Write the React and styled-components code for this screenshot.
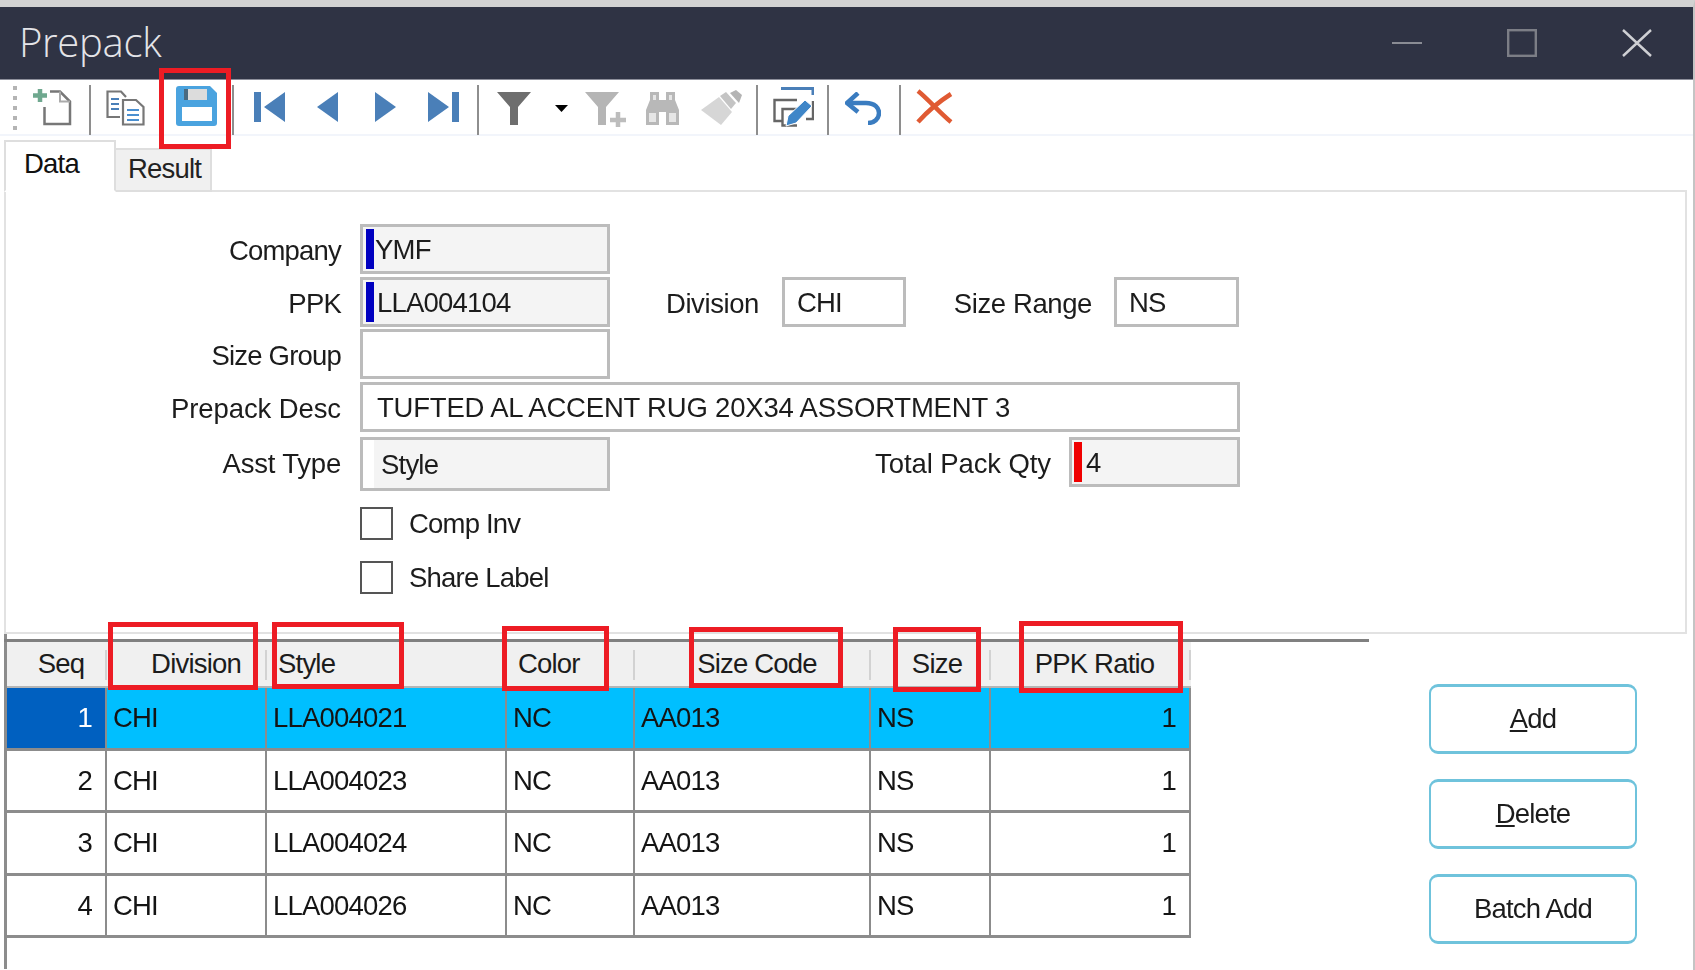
import React from 'react'
import styled, { createGlobalStyle } from 'styled-components'

const GlobalStyle = createGlobalStyle`
    html, body {
        margin: 0;
        padding: 0;
        background: #fff;
    }
    body {
        font-family: "Liberation Sans", Arial, sans-serif;
        font-size: 27.5px;
        letter-spacing: -0.8px;
        color: #1c1c1c;
        overflow: hidden;
    }
`

const Window = styled.div`
    width: 1695px;
    height: 970px;
    position: relative;
    overflow: hidden;
    background: #fff;
`

// the shot is an enlarged bitmap, so everything but the red marks is a little soft
const Screen = styled.div`
    height: 100%;
    box-sizing: border-box;
    border-top: 7px solid #d2d2d2;
    border-right: 2px solid #c4c4c4;
    filter: blur(0.5px);
`

const TitleBar = styled.div`
    height: 73px;
    box-sizing: border-box;
    background: #2f3344;
    border-bottom: 1px solid #8d8f9b;
    display: flex;
    align-items: center;
    justify-content: space-between;
    padding-left: 19px;
`

const Title = styled.div`
    font-family: "Open Sans", sans-serif;
    font-weight: 300;
    font-size: 40px;
    letter-spacing: -0.3px;
    color: #e4e4e8;
    margin-top: -3px;
`

const WinControls = styled.div`
    display: flex;
    align-items: center;
    gap: 85px;
    padding-right: 41px;
`

const Toolbar = styled.div`
    height: 56px;
    box-sizing: border-box;
    display: flex;
    align-items: flex-start;
    border-bottom: 2px solid #f2f5fb;
    padding-left: 13px;
    position: relative;
`

const Grip = styled.div`
    width: 4px;
    height: 46px;
    margin-top: 6px;
    background: repeating-linear-gradient(to bottom, #b4b4b4 0 4px, transparent 4px 10px);
`

const Sep = styled.div`
    width: 2px;
    height: 50px;
    margin-top: 5px;
    margin-left: ${p => p.$left}px;
    background: #8e8e8e;
    flex: none;
`

const Tool = styled.svg`
    flex: none;
    display: block;
    margin-left: ${p => p.$left}px;
    margin-top: ${p => p.$top}px;
`

const TabStrip = styled.div`
    display: flex;
    align-items: flex-end;
    height: 56px;
    box-sizing: border-box;
    padding-left: 4px;
    margin-right: 6px;
    margin-bottom: -2px;
    position: relative;
    z-index: 1;
`

const Tab = styled.div`
    box-sizing: border-box;
    width: ${p => p.$width}px;
    height: ${p => (p.$active ? 52 : 44)}px;
    background: ${p => (p.$active ? '#fff' : '#f0f0f0')};
    border: 2px solid #dedede;
    border-left-width: ${p => (p.$active ? 2 : 0)}px;
    border-bottom-color: ${p => (p.$active ? '#fff' : '#dedede')};
    color: ${p => (p.$active ? '#111' : '#222')};
    padding: ${p => (p.$active ? '6px 0 0 18px' : '3px 0 0 12px')};
    line-height: 32px;
`

const Panel = styled.div`
    box-sizing: border-box;
    height: 444px;
    margin: 0 6px 0 4px;
    border: 2px solid #e2e2e2;
    padding-top: 32px;
    display: flex;
    flex-direction: column;
`

const Row = styled.div`
    display: flex;
    align-items: flex-start;
    margin-bottom: ${p => p.$gap}px;
`

const Label = styled.div`
    box-sizing: border-box;
    width: ${p => p.$width}px;
    height: 50px;
    flex: none;
    text-align: right;
    line-height: ${p => p.$lh || 53}px;
    letter-spacing: ${p => p.$track || -0.8}px;
    white-space: nowrap;
`

const Field = styled.div`
    box-sizing: border-box;
    flex: none;
    width: ${p => p.$width}px;
    height: ${p => p.$height || 50}px;
    margin-left: ${p => p.$left}px;
    border: 3px solid #bcbcbc;
    background: ${p => (p.$readonly ? '#f4f4f4' : '#fff')};
    padding-left: ${p => p.$pad}px;
    letter-spacing: ${p => p.$track || -0.8}px;
    line-height: 41px;
    display: flex;
    align-items: center;
    white-space: nowrap;
`

const Marker = styled.span`
    width: 8px;
    height: 40px;
    margin-right: ${p => p.$space}px;
    flex: none;
    background: ${p => p.$color};
`

const StyleField = styled(Field)`
    background: linear-gradient(to right, #fff 0 11px, #f4f4f4 11px);
`

const CheckRow = styled.div`
    display: flex;
    align-items: center;
    gap: 16px;
    margin: 0 0 21px 354px;
    height: 33px;
`

const CheckBox = styled.span`
    box-sizing: border-box;
    width: 33px;
    height: 33px;
    border: 2px solid #555;
    background: #fff;
`

const Lower = styled.div`
    display: flex;
    position: relative;
    height: 335px;
    margin-left: 4px;
    border-left: 3px solid #8c8c8c;
`

const TopRule = styled.div`
    position: absolute;
    left: -3px;
    top: 5px;
    width: 1365px;
    height: 3px;
    background: #808080;
`

const Table = styled.div`
    display: grid;
    grid-template-columns: 100px 160px 240px 128px 236px 120px 200px;
    grid-template-rows: 46px repeat(4, 62.5px);
    margin-top: 8px;
    align-self: flex-start;
    width: 1184px;
`

const HeadCell = styled.div`
    position: relative;
    box-sizing: border-box;
    background: #f0f0f0;
    border-bottom: 2px solid #b5b5b5;
    text-align: ${p => p.$align};
    padding-left: ${p => p.$left || 0}px;
    padding-right: ${p => p.$right || 0}px;
    line-height: 44px;
    white-space: nowrap;

    &::after {
        content: '';
        position: absolute;
        right: 0;
        top: 8px;
        bottom: 6px;
        width: 2px;
        background: #d2d2d2;
    }
`

const Cell = styled.div`
    box-sizing: border-box;
    background: ${p => (p.$mark ? '#0060c0' : p.$selected ? '#00bfff' : '#fff')};
    color: ${p => (p.$mark ? '#fff' : '#141414')};
    border-right: 2px solid #8c8c8c;
    border-bottom: 3px solid #8c8c8c;
    text-align: ${p => (p.$right ? 'right' : 'left')};
    padding: ${p => (p.$right ? `0 ${p.$right}px 0 0` : '0 0 0 6px')};
    line-height: 60px;
    white-space: nowrap;
`

const Actions = styled.div`
    display: flex;
    flex-direction: column;
    gap: 25px;
    margin: 50px 0 0 238px;
`

const ActionButton = styled.div`
    box-sizing: border-box;
    width: 208px;
    height: 70px;
    border: 2px solid #6fc3dc;
    border-top-width: 3px;
    border-bottom-width: 3px;
    border-radius: 9px;
    display: flex;
    align-items: center;
    justify-content: center;
    color: #1c1c1c;
`

const Highlight = styled.div`
    position: absolute;
    box-sizing: border-box;
    left: ${p => p.$x}px;
    top: ${p => p.$y}px;
    width: ${p => p.$w}px;
    height: ${p => p.$h}px;
    border: 5px solid #ed1c24;
    z-index: 3;
    pointer-events: none;
`

const BLUE = '#4a7fb8'

const NewIcon = () => (
    <Tool $left={15} $top={8} width="40" height="38" viewBox="0 0 40 38">
        <path d="M1 7.5H15M8 1V14" stroke="#6fa88f" strokeWidth="4.5" fill="none" />
        <path d="M18 3.5H28L38 13.5V36H12.5V19" stroke="#777" strokeWidth="2.5" fill="none" />
        <path d="M28 3.5V13.5H38" stroke="#aaa" strokeWidth="2" fill="none" />
    </Tool>
)

const CopyIcon = () => (
    <Tool $left={15} $top={10} width="39" height="36" viewBox="0 0 39 36">
        <path d="M14 27H1.5V1.5H15L20 7" stroke="#777" strokeWidth="2.2" fill="none" />
        <path d="M5 9H13M5 14H13M5 19H13" stroke="#4a7fb8" strokeWidth="2" />
        <path d="M17 10H30L37.5 17V34.5H17Z" stroke="#777" strokeWidth="2.2" fill="#fff" />
        <path d="M21 20H33M21 25H33M21 30H33" stroke="#4a8fd0" strokeWidth="2" />
    </Tool>
)

const SaveIcon = () => (
    <Tool $left={31} $top={6} width="41" height="40" viewBox="0 0 41 40">
        <path d="M0 3Q0 0 3 0H34L41 7V37Q41 40 38 40H3Q0 40 0 37Z" fill="#4aa3df" />
        <path d="M8 3H12V14H8Z" fill="#4a6a80" />
        <path d="M12 3H31V14H12Z" fill="#dcdcdc" />
        <path d="M6 21H36V35H6Z" fill="#fff" />
    </Tool>
)

const FirstIcon = () => (
    <Tool $left={20} $top={12} width="31" height="30" viewBox="0 0 31 30">
        <path d="M0 0H7V30H0ZM10 15L31 0V30Z" fill={BLUE} />
    </Tool>
)

const PrevIcon = () => (
    <Tool $left={32} $top={12} width="21" height="30" viewBox="0 0 21 30">
        <path d="M0 15L21 0V30Z" fill={BLUE} />
    </Tool>
)

const NextIcon = () => (
    <Tool $left={37} $top={12} width="21" height="30" viewBox="0 0 21 30">
        <path d="M0 0L21 15L0 30Z" fill={BLUE} />
    </Tool>
)

const LastIcon = () => (
    <Tool $left={32} $top={12} width="31" height="30" viewBox="0 0 31 30">
        <path d="M0 0L21 15L0 30ZM24 0H31V30H24Z" fill={BLUE} />
    </Tool>
)

const FilterIcon = () => (
    <Tool $left={18} $top={12} width="34" height="33" viewBox="0 0 34 33">
        <path d="M0 0H34L21 15V33H13V15Z" fill="#6e6e6e" />
    </Tool>
)

const CaretIcon = () => (
    <Tool $left={24} $top={25} width="13" height="7" viewBox="0 0 13 7">
        <path d="M0 0H13L6.5 7Z" fill="#000" />
    </Tool>
)

const FilterAddIcon = () => (
    <Tool $left={17} $top={12} width="41" height="35" viewBox="0 0 41 35">
        <path d="M0 0H34L21 15V33H13V15Z" fill="#b5b5b5" />
        <path d="M25 28H41M33 20V35" stroke="#bdbdbd" strokeWidth="4.5" />
    </Tool>
)

const BinocularsIcon = () => (
    <Tool $left={18} $top={12} width="37" height="33" viewBox="0 0 37 33">
        <path d="M6 0H15V8H22V0H31V8L35 18V33H22V20H15V33H2V18L6 8Z" fill="#b8b8b8" />
        <path d="M9 3H12V8H9ZM25 3H28V8H25ZM5 21H12V30H5ZM25 21H32V30H25Z" fill="#e6e6e6" />
    </Tool>
)

const BrushIcon = () => (
    <Tool $left={20} $top={10} width="41" height="36" viewBox="0 0 41 36">
        <path d="M0 20L18 7L31 22L20 35Z" fill="#d6d6d6" />
        <path d="M19 6L25 2L35 13L30 19Z" fill="#c4c4c4" />
        <path d="M29 3L35 0L41 5L38 13Z" fill="#b4b4b4" />
    </Tool>
)

const EditIcon = () => (
    <Tool $left={15} $top={7} width="41" height="40" viewBox="0 0 41 40">
        <path d="M8 1.5H40V8" stroke="#4a7fb8" strokeWidth="3" fill="none" />
        <path d="M24 13H1.5V34H10M24 22H9.5V38.5H24M40 14V32H33" stroke="#666" strokeWidth="2.4" fill="none" />
        <path d="M13 39L15 29L32 13L39 19L23 36Z" fill="#3f86c8" stroke="#fff" strokeWidth="1" />
    </Tool>
)

const UndoIcon = () => (
    <Tool $left={16} $top={12} width="36" height="33" viewBox="0 0 36 33">
        <path d="M13 1L2 11L13 20" stroke="#3a7cc0" strokeWidth="4.5" fill="none" />
        <path d="M3 11H21C30 11 34 16 34 21C34 27 29 31 23 31" stroke="#3a7cc0" strokeWidth="4.5" fill="none" />
    </Tool>
)

const DeleteIcon = () => (
    <Tool $left={15} $top={9} width="37" height="35" viewBox="0 0 37 35">
        <path d="M2 2C12 10 24 24 35 33M35 5C24 12 11 23 2 33" stroke="#e05a33" strokeWidth="4.5" fill="none" />
    </Tool>
)

const columns = [
    { title: 'Seq', align: 'center', left: 8 },
    { title: 'Division', align: 'right', right: 26 },
    { title: 'Style', align: 'left', left: 11 },
    { title: 'Color', align: 'left', left: 11 },
    { title: 'Size Code', align: 'center', left: 8 },
    { title: 'Size', align: 'center', left: 12 },
    { title: 'PPK Ratio', align: 'center', left: 7 },
]

const rows = [
    ['1', 'CHI', 'LLA004021', 'NC', 'AA013', 'NS', '1'],
    ['2', 'CHI', 'LLA004023', 'NC', 'AA013', 'NS', '1'],
    ['3', 'CHI', 'LLA004024', 'NC', 'AA013', 'NS', '1'],
    ['4', 'CHI', 'LLA004026', 'NC', 'AA013', 'NS', '1'],
]

const highlights = [
    { x: 159, y: 68, w: 72, h: 81 },
    { x: 108, y: 622, w: 150, h: 68 },
    { x: 272, y: 622, w: 132, h: 67 },
    { x: 502, y: 626, w: 107, h: 65 },
    { x: 689, y: 627, w: 154, h: 61 },
    { x: 893, y: 627, w: 88, h: 65 },
    { x: 1019, y: 621, w: 164, h: 72 },
]

export default function App() {
    return (
        <>
            <GlobalStyle />
            <Window>
                <Screen>
                    <TitleBar>
                        <Title>Prepack</Title>
                        <WinControls>
                            <svg width="30" height="3"><rect width="30" height="2" fill="#8a8c94" /></svg>
                            <svg width="30" height="28"><rect x="1.2" y="1.2" width="27.6" height="25.6" fill="none" stroke="#7c7e86" strokeWidth="2.4" /></svg>
                            <svg width="30" height="28"><path d="M1 1L29 27M29 1L1 27" stroke="#cfd0d4" strokeWidth="2.4" /></svg>
                        </WinControls>
                    </TitleBar>
                    <Toolbar>
                        <Grip />
                        <NewIcon />
                        <Sep $left={17} />
                        <CopyIcon />
                        <SaveIcon />
                        <Sep $left={15} />
                        <FirstIcon />
                        <PrevIcon />
                        <NextIcon />
                        <LastIcon />
                        <Sep $left={18} />
                        <FilterIcon />
                        <CaretIcon />
                        <FilterAddIcon />
                        <BinocularsIcon />
                        <BrushIcon />
                        <Sep $left={14} />
                        <EditIcon />
                        <Sep $left={13} />
                        <UndoIcon />
                        <Sep $left={18} />
                        <DeleteIcon />
                    </Toolbar>
                    <TabStrip>
                        <Tab $active $width={112}>Data</Tab>
                        <Tab $width={96}>Result</Tab>
                    </TabStrip>
                    <Panel>
                        <Row $gap={3}>
                            <Label $width={335}>Company</Label>
                            <Field $left={19} $width={250} $pad={3} $readonly>
                                <Marker $color="#0000c0" $space={1} />YMF
                            </Field>
                        </Row>
                        <Row $gap={2}>
                            <Label $width={335}>PPK</Label>
                            <Field $left={19} $width={250} $pad={3} $readonly>
                                <Marker $color="#0000c0" $space={3} />LLA004104
                            </Field>
                            <Label $width={149} $track={-0.4}>Division</Label>
                            <Field $left={23} $width={124} $pad={12}>CHI</Field>
                            <Label $width={186} $track={-0.4}>Size Range</Label>
                            <Field $left={22} $width={125} $pad={12}>NS</Field>
                        </Row>
                        <Row $gap={3}>
                            <Label $width={335}>Size Group</Label>
                            <Field $left={19} $width={250} />
                        </Row>
                        <Row $gap={5}>
                            <Label $width={335} $track={-0.1}>Prepack Desc</Label>
                            <Field $left={19} $width={880} $pad={14} $track={-0.2}>TUFTED AL ACCENT RUG 20X34 ASSORTMENT 3</Field>
                        </Row>
                        <Row $gap={16}>
                            <Label $width={335} $lh={54} $track={-0.2}>Asst Type</Label>
                            <StyleField $left={19} $width={250} $height={54} $pad={18}>Style</StyleField>
                            <Label $width={441} $lh={54} $track={-0.1}>Total Pack Qty</Label>
                            <Field $left={18} $width={171} $pad={2} $readonly>
                                <Marker $color="#f00000" $space={4} />4
                            </Field>
                        </Row>
                        <CheckRow><CheckBox />Comp Inv</CheckRow>
                        <CheckRow><CheckBox />Share Label</CheckRow>
                    </Panel>
                    <Lower>
                        <TopRule />
                        <Table>
                            {columns.map(c => (
                                <HeadCell key={c.title} $align={c.align} $left={c.left} $right={c.right}>{c.title}</HeadCell>
                            ))}
                            {rows.map((row, r) => row.map((value, c) => (
                                <Cell
                                    key={`${r}-${c}`}
                                    $selected={r === 0}
                                    $mark={r === 0 && c === 0}
                                    $right={c === 0 ? 13 : c === 6 ? 13 : 0}
                                >
                                    {value}
                                </Cell>
                            )))}
                        </Table>
                        <Actions>
                            <ActionButton><span><u>A</u>dd</span></ActionButton>
                            <ActionButton><span><u>D</u>elete</span></ActionButton>
                            <ActionButton>Batch Add</ActionButton>
                        </Actions>
                    </Lower>
                </Screen>
                {highlights.map(h => (
                    <Highlight key={`${h.x}-${h.y}`} $x={h.x} $y={h.y} $w={h.w} $h={h.h} />
                ))}
            </Window>
        </>
    )
}
